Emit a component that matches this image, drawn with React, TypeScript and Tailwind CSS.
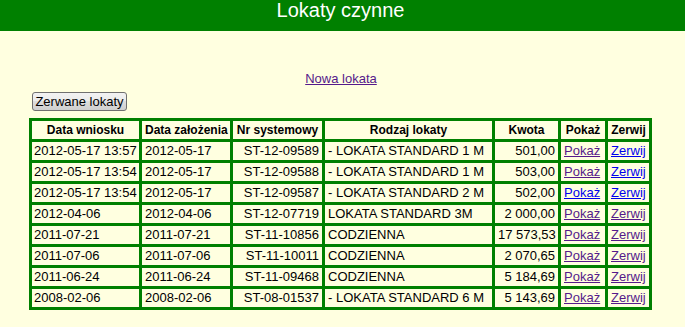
import React from "react";

type Row = {
  wniosek: string;
  zalozenie: string;
  nr: string;
  rodzaj: string;
  kwota: string;
  pokazVisited: boolean;
  zerwijVisited: boolean;
};

const rows: Row[] = [
  { wniosek: "2012-05-17 13:57", zalozenie: "2012-05-17", nr: "ST-12-09589", rodzaj: "- LOKATA STANDARD 1 M", kwota: "501,00", pokazVisited: true, zerwijVisited: false },
  { wniosek: "2012-05-17 13:54", zalozenie: "2012-05-17", nr: "ST-12-09588", rodzaj: "- LOKATA STANDARD 1 M", kwota: "503,00", pokazVisited: true, zerwijVisited: false },
  { wniosek: "2012-05-17 13:54", zalozenie: "2012-05-17", nr: "ST-12-09587", rodzaj: "- LOKATA STANDARD 2 M", kwota: "502,00", pokazVisited: false, zerwijVisited: false },
  { wniosek: "2012-04-06", zalozenie: "2012-04-06", nr: "ST-12-07719", rodzaj: "LOKATA STANDARD 3M", kwota: "2 000,00", pokazVisited: true, zerwijVisited: true },
  { wniosek: "2011-07-21", zalozenie: "2011-07-21", nr: "ST-11-10856", rodzaj: "CODZIENNA", kwota: "17 573,53", pokazVisited: true, zerwijVisited: true },
  { wniosek: "2011-07-06", zalozenie: "2011-07-06", nr: "ST-11-10011", rodzaj: "CODZIENNA", kwota: "2 070,65", pokazVisited: true, zerwijVisited: true },
  { wniosek: "2011-06-24", zalozenie: "2011-06-24", nr: "ST-11-09468", rodzaj: "CODZIENNA", kwota: "5 184,69", pokazVisited: true, zerwijVisited: true },
  { wniosek: "2008-02-06", zalozenie: "2008-02-06", nr: "ST-08-01537", rodzaj: "- LOKATA STANDARD 6 M", kwota: "5 143,69", pokazVisited: true, zerwijVisited: true },
];

const th =
  "h-[21px] border-r-[3px] border-b-[3px] border-[#008000] px-[3px] py-0 text-center align-middle text-[12px] font-bold leading-[18px] whitespace-nowrap";
const td =
  "h-[21px] border-r-[3px] border-b-[3px] border-[#008000] py-0 align-middle text-[13px] leading-[18px] whitespace-nowrap";

function LinkCell({ label, visited }: { label: string; visited: boolean }) {
  return (
    <td className={`${td} px-[3px] text-left`}>
      <a
        href="#"
        className={visited ? "underline text-[#551a8b]" : "underline text-[#0000ee]"}
      >
        {label}
      </a>
    </td>
  );
}

export default function App() {
  return (
    <div className="min-h-[327px] w-[685px] bg-[#ffffe0] font-['Liberation_Sans',Arial,sans-serif] text-black">
      <div className="h-[31px] w-full bg-[#008000] text-white">
        <div className="w-[681px] text-center text-[20px] leading-[21px]">Lokaty czynne</div>
      </div>

      <div className="w-[682px] pt-[40px] text-center text-[13px] leading-[15px]">
        <a href="#" className="underline text-[#551a8b]">
          Nowa lokata
        </a>
      </div>

      <div className="pl-[32px] pt-[6px]">
        <button className="flex h-[19px] w-[95px] items-center justify-center rounded-[3px] border border-[#707070] bg-[linear-gradient(#f2f2f2_0%,#ebebeb_50%,#dddddd_50%,#cfcfcf_100%)] text-[13px] leading-[15px] text-black">
          Zerwane lokaty
        </button>
      </div>

      <table className="ml-[29px] mt-[7px] w-[623px] table-fixed border-separate border-spacing-0 border-l-[3px] border-t-[3px] border-[#008000]">
        <thead>
          <tr>
            <th className={`${th} w-[110px]`}>Data wniosku</th>
            <th className={`${th} w-[91px]`}>Data założenia</th>
            <th className={`${th} w-[92px]`}>Nr systemowy</th>
            <th className={`${th} w-[170px]`}>Rodzaj lokaty</th>
            <th className={`${th} w-[66px]`}>Kwota</th>
            <th className={`${th} w-[47px]`}>Pokaż</th>
            <th className={`${th} w-[44px]`}>Zerwij</th>
          </tr>
        </thead>
        <tbody>
          {rows.map((r, i) => (
            <tr key={i}>
              <td className={`${td} pl-[2px] pr-[1px] text-left`}>{r.wniosek}</td>
              <td className={`${td} px-[3px] text-left`}>{r.zalozenie}</td>
              <td className={`${td} px-[3px] text-right`}>{r.nr}</td>
              <td className={`${td} px-[3px] text-left`}>{r.rodzaj}</td>
              <td className={`${td} px-[3px] text-right`}>{r.kwota}</td>
              <LinkCell label="Pokaż" visited={r.pokazVisited} />
              <LinkCell label="Zerwij" visited={r.zerwijVisited} />
            </tr>
          ))}
        </tbody>
      </table>
    </div>
  );
}
